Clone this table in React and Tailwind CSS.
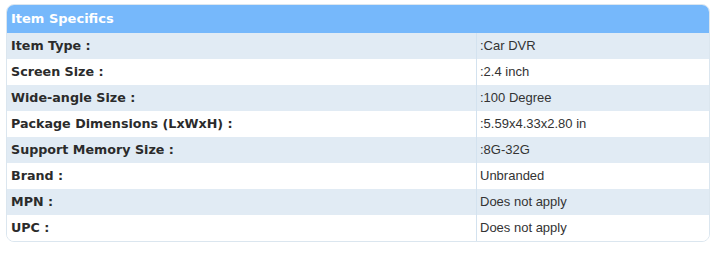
const rows = [
  ['Item Type :', ':Car DVR'],
  ['Screen Size :', ':2.4 inch'],
  ['Wide-angle Size :', ':100 Degree'],
  ['Package Dimensions (LxWxH) :', ':5.59x4.33x2.80 in'],
  ['Support Memory Size :', ':8G-32G'],
  ['Brand :', 'Unbranded'],
  ['MPN :', 'Does not apply'],
  ['UPC :', 'Does not apply'],
];

export default function App() {
  return (
    <div className="w-[716px] h-[257px] bg-white pt-[4px] pl-[6px]">
      <div className="w-[704px] rounded-[8px] border border-[#dbe6ef] overflow-hidden">
        <div className="h-[28px] bg-[#76b8fb] flex items-center px-[4px] text-white font-bold text-[13px] font-['DejaVu_Sans',sans-serif]">
          Item Specifics
        </div>
        {rows.map(([label, value], i) => (
          <div
            key={label}
            className={`h-[26px] flex items-center ${i % 2 === 0 ? 'bg-[#e1ebf4]' : 'bg-white'}`}
          >
            <div className="w-[469px] pl-[4px] font-bold text-[12.7px] text-[#2b2b2b] font-['DejaVu_Sans',sans-serif]">
              {label}
            </div>
            <div className="h-full flex-1 border-l border-[#d3e2ef] pl-[3px] flex items-center text-[13px] text-[#333333] font-['Liberation_Sans',sans-serif]">
              {value}
            </div>
          </div>
        ))}
      </div>
    </div>
  );
}
